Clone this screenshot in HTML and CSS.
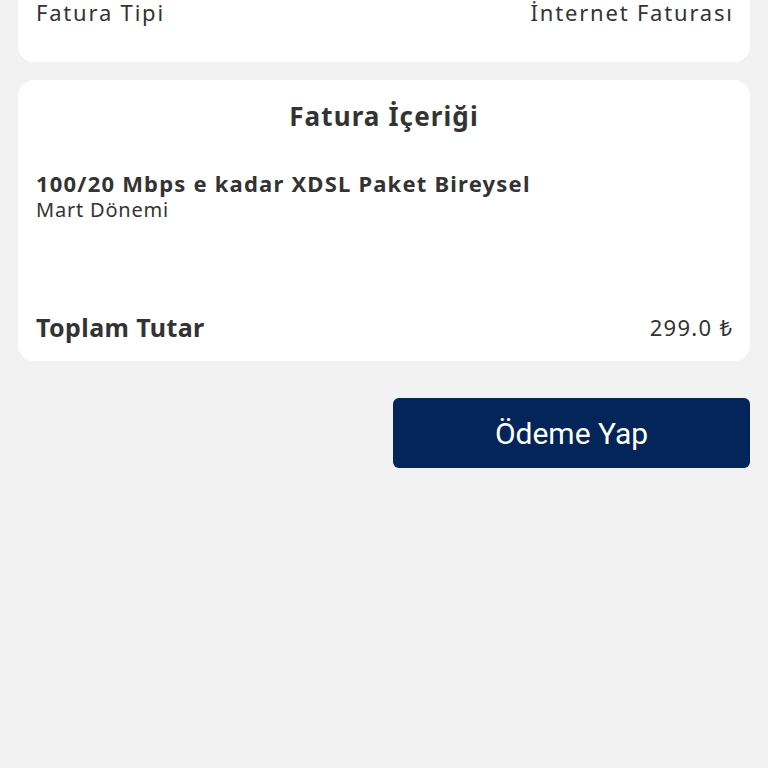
FILE: index.html
```html
<!DOCTYPE html>
<html lang="tr">
<head>
<meta charset="utf-8">
<link rel="stylesheet" href="styles.css">
</head>
<body>
<div class="page">
  <section class="card card-top">
    <div class="row">
      <span class="label">Fatura Tipi</span>
      <span class="value">İnternet Faturası</span>
    </div>
  </section>
  <section class="card card-content">
    <h2 class="title">Fatura İçeriği</h2>
    <div class="item">
      <div class="item-name">100/20 Mbps e kadar XDSL Paket Bireysel</div>
      <div class="item-sub">Mart Dönemi</div>
    </div>
    <div class="total">
      <span class="total-label">Toplam Tutar</span>
      <span class="total-value">299.0 ₺</span>
    </div>
  </section>
  <div class="actions">
    <button class="pay">Ödeme Yap</button>
  </div>
</div>
</body>
</html>
```

FILE: styles.css
```css
html, body {
  margin: 0;
  padding: 0;
  background: #f2f2f2;
}
body {
  font-family: "Noto Sans", "Open Sans", sans-serif;
  color: #333333;
  width: 768px;
  height: 768px;
  overflow: hidden;
}
.page {
  display: flex;
  flex-direction: column;
  padding: 0 18px;
}
.card {
  background: #ffffff;
  border-radius: 16px;
}
.card-top {
  margin-top: -16px;
  padding: 0 18px 34px;
  border-top-left-radius: 0;
  border-top-right-radius: 0;
}
.row {
  display: flex;
  justify-content: space-between;
  align-items: center;
  height: 32px;
  padding-top: 12px;
  font-size: 22px;
  letter-spacing: 1.8px;
}
.row .value {
  margin-right: -1.8px;
}
.card-content {
  margin-top: 18px;
  padding: 20px 18px 19px;
  display: flex;
  flex-direction: column;
}
.title {
  margin: 0;
  text-align: center;
  font-size: 26px;
  line-height: 32px;
  font-weight: 700;
  letter-spacing: 1.1px;
}
.item {
  margin-top: 38px;
}
.item-name {
  font-size: 22px;
  line-height: 26px;
  font-weight: 700;
  letter-spacing: 1.2px;
}
.item-sub {
  font-size: 20px;
  line-height: 24px;
  margin-top: 2px;
  letter-spacing: 0.8px;
}
.total {
  margin-top: 90px;
  display: flex;
  justify-content: space-between;
  align-items: center;
  height: 30px;
}
.total-label {
  font-size: 25px;
  font-weight: 700;
  letter-spacing: 0.4px;
}
.total-value {
  font-size: 22px;
  letter-spacing: 1.3px;
  margin-right: -1.3px;
}
.actions {
  display: flex;
  justify-content: flex-end;
  margin-top: 37px;
}
.pay {
  width: 357px;
  height: 70px;
  background: #03255a;
  color: #ffffff;
  border: none;
  border-radius: 6px;
  font-family: Roboto, "Liberation Sans", sans-serif;
  font-size: 30px;
  font-weight: 400;
  cursor: pointer;
}
```
